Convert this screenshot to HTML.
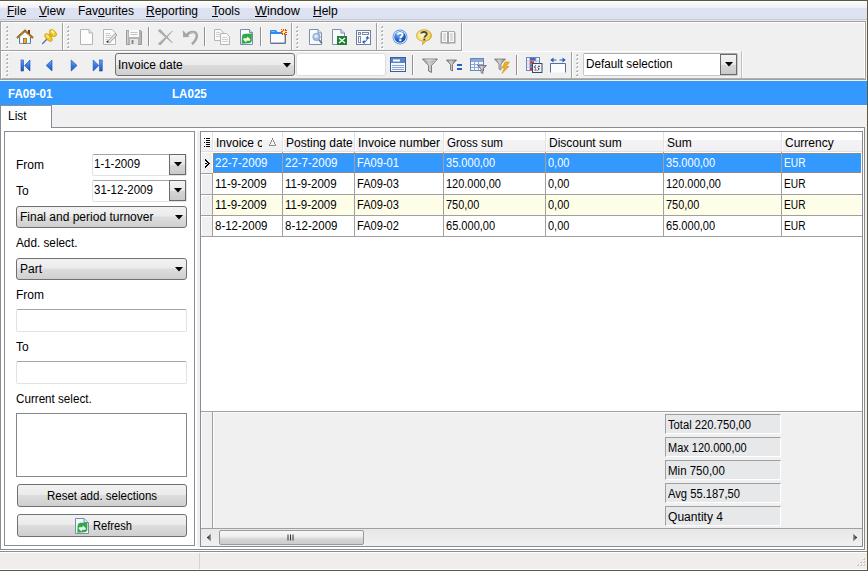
<!DOCTYPE html>
<html><head><meta charset="utf-8">
<style>
*{margin:0;padding:0;box-sizing:border-box}
html,body{width:868px;height:571px;overflow:hidden;background:#f0f0f0;font-family:"Liberation Sans",sans-serif;font-size:12px;color:#000}
.a{position:absolute}
.t{position:absolute;white-space:nowrap;line-height:14px}
u{text-decoration:underline;text-underline-offset:1px;text-decoration-thickness:1px}
.g{position:absolute;width:2px;background:repeating-linear-gradient(#b0b0b0 0 1px,#fff 1px 2px,transparent 2px 4px)}
.vs{position:absolute;width:1px;background:#a0a0a0;box-shadow:1px 0 0 #fff}
.ic{position:absolute;width:16px;height:16px}
</style></head><body>
<!-- frame lines -->
<div class="a" style="left:0;top:0;width:868px;height:1px;background:#5c5a38"></div>
<div class="a" style="left:867px;top:0;width:1px;height:571px;background:#5c5a38"></div>
<div class="a" style="left:0;top:570px;width:868px;height:1px;background:#5c5a38"></div>

<!-- menu bar -->
<div class="a" style="left:0;top:1px;width:867px;height:18px;background:linear-gradient(#ffffff 0px,#f8f9fc 2px,#edf0f8 7px,#dfe3f1 7px,#dce1f0 18px)"></div>
<div class="a" style="left:0;top:19px;width:867px;height:1px;background:#c4c9d6"></div>
<div class="a" style="left:0;top:20px;width:867px;height:1px;background:#e6e8ec"></div>
<div id="menu" style="font-size:12px">
<div class="t" style="left:7px;top:4px"><u>F</u>ile</div>
<div class="t" style="left:39px;top:4px"><u>V</u>iew</div>
<div class="t" style="left:78px;top:4px">Fav<u>o</u>urites</div>
<div class="t" style="left:146px;top:4px"><u>R</u>eporting</div>
<div class="t" style="left:212px;top:4px"><u>T</u>ools</div>
<div class="t" style="left:255px;top:4px;transform:scaleX(1.05);transform-origin:0 0"><u>W</u>indow</div>
<div class="t" style="left:313px;top:4px"><u>H</u>elp</div>
</div>

<!-- toolbar container -->
<div class="a" style="left:0;top:21px;width:866px;height:59px;border:1px solid #a0a0a0;background:#f0f0f0"></div>
<div class="a" style="left:1px;top:22px;width:864px;height:57px;border:1px solid #fff;border-bottom-color:#b0b0b0"></div>
<!-- toolbar groups -->
<div class="a" style="left:1px;top:50px;width:461px;height:1px;background:#a0a0a0"></div>
<div class="a" style="left:1px;top:51px;width:461px;height:1px;background:#fff"></div>
<div class="vs" style="left:62px;top:23px;height:27px"></div>
<div class="vs" style="left:291px;top:23px;height:27px"></div>
<div class="vs" style="left:376px;top:23px;height:27px"></div>
<div class="vs" style="left:461px;top:23px;height:27px"></div>
<div class="vs" style="left:571px;top:51px;height:27px"></div>
<svg class="a" style="left:6px;top:26px" width="3" height="23"><path d="M1 2h2v1h-2zM1 6h2v1h-2zM1 10h2v1h-2zM1 14h2v1h-2zM1 18h2v1h-2zM1 22h2v1h-2z" fill="#ffffff"/><path d="M1 0h1v1h-1zM0 1h2v1h-2zM1 4h1v1h-1zM0 5h2v1h-2zM1 8h1v1h-1zM0 9h2v1h-2zM1 12h1v1h-1zM0 13h2v1h-2zM1 16h1v1h-1zM0 17h2v1h-2zM1 20h1v1h-1zM0 21h2v1h-2z" fill="#b0b0b0"/></svg>
<svg class="a" style="left:67px;top:26px" width="3" height="23"><path d="M1 2h2v1h-2zM1 6h2v1h-2zM1 10h2v1h-2zM1 14h2v1h-2zM1 18h2v1h-2zM1 22h2v1h-2z" fill="#ffffff"/><path d="M1 0h1v1h-1zM0 1h2v1h-2zM1 4h1v1h-1zM0 5h2v1h-2zM1 8h1v1h-1zM0 9h2v1h-2zM1 12h1v1h-1zM0 13h2v1h-2zM1 16h1v1h-1zM0 17h2v1h-2zM1 20h1v1h-1zM0 21h2v1h-2z" fill="#b0b0b0"/></svg>
<svg class="a" style="left:296px;top:26px" width="3" height="23"><path d="M1 2h2v1h-2zM1 6h2v1h-2zM1 10h2v1h-2zM1 14h2v1h-2zM1 18h2v1h-2zM1 22h2v1h-2z" fill="#ffffff"/><path d="M1 0h1v1h-1zM0 1h2v1h-2zM1 4h1v1h-1zM0 5h2v1h-2zM1 8h1v1h-1zM0 9h2v1h-2zM1 12h1v1h-1zM0 13h2v1h-2zM1 16h1v1h-1zM0 17h2v1h-2zM1 20h1v1h-1zM0 21h2v1h-2z" fill="#b0b0b0"/></svg>
<svg class="a" style="left:381px;top:26px" width="3" height="23"><path d="M1 2h2v1h-2zM1 6h2v1h-2zM1 10h2v1h-2zM1 14h2v1h-2zM1 18h2v1h-2zM1 22h2v1h-2z" fill="#ffffff"/><path d="M1 0h1v1h-1zM0 1h2v1h-2zM1 4h1v1h-1zM0 5h2v1h-2zM1 8h1v1h-1zM0 9h2v1h-2zM1 12h1v1h-1zM0 13h2v1h-2zM1 16h1v1h-1zM0 17h2v1h-2zM1 20h1v1h-1zM0 21h2v1h-2z" fill="#b0b0b0"/></svg>
<svg class="a" style="left:6px;top:54px" width="3" height="23"><path d="M1 2h2v1h-2zM1 6h2v1h-2zM1 10h2v1h-2zM1 14h2v1h-2zM1 18h2v1h-2zM1 22h2v1h-2z" fill="#ffffff"/><path d="M1 0h1v1h-1zM0 1h2v1h-2zM1 4h1v1h-1zM0 5h2v1h-2zM1 8h1v1h-1zM0 9h2v1h-2zM1 12h1v1h-1zM0 13h2v1h-2zM1 16h1v1h-1zM0 17h2v1h-2zM1 20h1v1h-1zM0 21h2v1h-2z" fill="#b0b0b0"/></svg>
<svg class="a" style="left:576px;top:54px" width="3" height="23"><path d="M1 2h2v1h-2zM1 6h2v1h-2zM1 10h2v1h-2zM1 14h2v1h-2zM1 18h2v1h-2zM1 22h2v1h-2z" fill="#ffffff"/><path d="M1 0h1v1h-1zM0 1h2v1h-2zM1 4h1v1h-1zM0 5h2v1h-2zM1 8h1v1h-1zM0 9h2v1h-2zM1 12h1v1h-1zM0 13h2v1h-2zM1 16h1v1h-1zM0 17h2v1h-2zM1 20h1v1h-1zM0 21h2v1h-2z" fill="#b0b0b0"/></svg>
<div class="vs" style="left:148px;top:27px;height:19px;background:#909090"></div>
<div class="vs" style="left:204px;top:27px;height:19px;background:#909090"></div>
<div class="vs" style="left:260px;top:27px;height:19px;background:#909090"></div>
<div class="vs" style="left:412px;top:55px;height:20px;background:#909090"></div>
<div class="vs" style="left:516px;top:55px;height:20px;background:#909090"></div>
<!-- icons -->
<svg class="a" style="left:14px;top:59px" width="96" height="14" viewBox="0 0 96 14"><defs><linearGradient id="ng" x1="0" y1="0" x2="0" y2="1"><stop offset="0" stop-color="#6aa8f4"/><stop offset="0.5" stop-color="#3a7ae0"/><stop offset="1" stop-color="#1c54c0"/></linearGradient></defs>
<rect x="7" y="1" width="2.6" height="11" fill="url(#ng)" stroke="#1a4aa8" stroke-width="0.6"/>
<path d="M16 1 V12 L10.6 6.5 Z" fill="url(#ng)" stroke="#1a4aa8" stroke-width="0.6" stroke-linejoin="round"/>
<path d="M38 1 V12 L32.2 6.5 Z" fill="url(#ng)" stroke="#1a4aa8" stroke-width="0.6" stroke-linejoin="round"/>
<path d="M57.2 1 V12 L63 6.5 Z" fill="url(#ng)" stroke="#1a4aa8" stroke-width="0.6" stroke-linejoin="round"/>
<path d="M79.2 1 V12 L84.8 6.5 Z" fill="url(#ng)" stroke="#1a4aa8" stroke-width="0.6" stroke-linejoin="round"/>
<rect x="85.6" y="1" width="2.6" height="11" fill="url(#ng)" stroke="#1a4aa8" stroke-width="0.6"/>
</svg>
<svg class="a" style="left:16px;top:29px" width="18" height="16" viewBox="0 0 18 16"><rect x="12" y="1" width="2" height="4" fill="#9a2418"/>
<path d="M3.5 7.5 L9 2.5 L14.5 7.5 V14.5 H3.5 Z" fill="#fbfcfe" stroke="#66799a" stroke-width="1"/>
<path d="M4.5 8 V14 H13.5 V8" fill="none" stroke="#dce4f0" stroke-width="0.6"/>
<path d="M1 9 L9 1.6 L17 9" fill="none" stroke="#6e5020" stroke-width="2"/>
<path d="M1.6 8.6 L9 1.9 L16.4 8.6" fill="none" stroke="#f2b418" stroke-width="1.1" stroke-dasharray="1 0.6"/>
<rect x="7.5" y="9.5" width="3" height="5" fill="#f4ac10" stroke="#6a5a40" stroke-width="0.7"/></svg>
<svg class="a" style="left:41px;top:29px" width="16" height="16" viewBox="0 0 16 16"><path d="M1.2 15 L6 10" stroke="#4a6898" stroke-width="1.1"/>
<g transform="rotate(45 8.5 7.5)">
<path d="M6.5 4 H10.5 L11 8 H6 Z" fill="#e0b418"/>
<ellipse cx="8.5" cy="2.6" rx="4.3" ry="2.6" fill="#f2cf30" stroke="#c49812" stroke-width="0.7"/>
<ellipse cx="8.5" cy="9" rx="4.8" ry="2.4" fill="#f0c828" stroke="#c49812" stroke-width="0.7"/>
<ellipse cx="7.5" cy="2" rx="2" ry="1" fill="#fff0a0"/>
<ellipse cx="7" cy="8.6" rx="2" ry="0.9" fill="#fae890"/>
</g></svg>
<svg class="a" style="left:79px;top:29px" width="16" height="16" viewBox="0 0 16 16"><path d="M1.5 0.5 H10 L13.5 4 V15.5 H1.5 Z" fill="#fcfcfc" stroke="#b4b4b4"/>
<path d="M10 0.5 V4 H13.5" fill="#e8e8e8" stroke="#b4b4b4"/></svg>
<svg class="a" style="left:102px;top:29px" width="16" height="16" viewBox="0 0 16 16"><path d="M1.5 0.5 H10 L13.5 4 V15.5 H1.5 Z" fill="#fcfcfc" stroke="#b4b4b4"/>
<path d="M3.5 4.5 H8 M3.5 6.5 H9 M3.5 8.5 H8 M3.5 10.5 H6 M3.5 12.5 H5" stroke="#c8c8c8"/>
<path d="M5.5 12.5 L13 4.5 L15 6 L7.5 14 Z" fill="#e0e0e0" stroke="#8c8c8c" stroke-width="0.8"/>
<path d="M5 13.5 L6 12" stroke="#303030" stroke-width="1.5"/></svg>
<svg class="a" style="left:126px;top:29px" width="16" height="16" viewBox="0 0 16 16"><path d="M0.5 1.5 H14.5 L15.5 2.5 V15.5 H0.5 Z" fill="#b4b4b4" stroke="#9a9a9a"/>
<rect x="3" y="1" width="10" height="7" fill="#fbfbfb"/>
<path d="M4.5 3.5 H11.5 M4.5 5.5 H11.5" stroke="#c4c4c4"/>
<rect x="4" y="10" width="8" height="6" fill="#e8e8e8"/>
<rect x="5.5" y="11" width="2" height="4" fill="#8a8a8a"/>
<rect x="1" y="2" width="1" height="13" fill="#d0d0d0"/></svg>
<svg class="a" style="left:157px;top:28px" width="16" height="18" viewBox="0 0 16 18"><path d="M1 3 Q1.5 0.8 3.5 1.5 L15.5 14.2 L15 15 Z" fill="#a4a4a4"/>
<path d="M15.5 2.5 L15.5 3.2 L4 16.8 Q1.5 17.8 1.2 15.5 Z" fill="#a4a4a4"/>
<path d="M2.2 2.4 L14 13.5 M14.2 4 L2.5 15.5" stroke="#c4c4c4" stroke-width="0.5"/></svg>
<svg class="a" style="left:182px;top:29px" width="16" height="16" viewBox="0 0 16 16"><path d="M4.6 6.6 C7.5 1.8 14.8 1.8 14.8 7 C14.8 10 12.5 12.8 10 15.2" fill="none" stroke="#a6a6a6" stroke-width="2.5"/>
<path d="M0.8 1.3 L1.2 8.2 L7.6 8 Z" fill="#a6a6a6"/>
<path d="M8 4.2 C10 2.6 13.6 3 13.8 6.5" fill="none" stroke="#c8c8c8" stroke-width="0.6"/></svg>
<svg class="a" style="left:214px;top:29px" width="16" height="16" viewBox="0 0 16 16"><path d="M0.5 0.5 H6.5 L9 3 V11.5 H0.5 Z" fill="#fafafa" stroke="#b4b4b4"/>
<path d="M2 3.5 H6 M2 5.5 H7 M2 7.5 H7" stroke="#d0d0d0"/>
<path d="M6.5 4.5 H12.5 L15.5 7.5 V15.5 H6.5 Z" fill="#fafafa" stroke="#b4b4b4"/>
<path d="M8 8.5 H13 M8 10.5 H14 M8 12.5 H14" stroke="#d0d0d0"/></svg>
<svg class="a" style="left:239px;top:29px" width="16" height="16" viewBox="0 0 16 16"><path d="M1.5 0.5 H10.5 L13.5 3.5 V15.5 H1.5 Z" fill="#fcfdff" stroke="#7a8cac"/>
<path d="M10.5 0.5 V3.5 H13.5" fill="#d8e4f4" stroke="#7a8cac"/>
<path d="M3 7.5 Q3.2 5 6 4.8 L13 4.4 L12.8 11.5 Q12.5 14.2 9.5 14.3 L2.7 14.8 Z" fill="#34a848"/>
<path d="M4.5 9.8 H10 L8.2 8.2 M11 11.2 H5.5 L7.3 12.8" fill="none" stroke="#f4fff4" stroke-width="1.2"/></svg>
<svg class="a" style="left:270px;top:29px" width="17" height="16" viewBox="0 0 17 16"><path d="M0.5 4.5 H15.5 V14.5 H0.5 Z" fill="#fafbfe" stroke="#6e7e9c"/>
<path d="M1 14 H15 V5" fill="none" stroke="#5a6a88" stroke-width="0.8"/>
<path d="M0 5 V2.2 Q0 1 1.5 1 H5.5 Q6.5 1 7 2.5 L7.5 3 H12 V5 Z" fill="#2a8cf0"/>
<path d="M1.5 2.5 H5" stroke="#9ccaf8" stroke-width="0.8"/>
<path d="M11 0h1v1h-1zM13 0h1v1h-1zM15 0h1v1h-1zM13 1h1v1h-1zM15 1h1v1h-1zM16 1h1v1h-1zM11 2h1v1h-1zM12 2h1v1h-1zM15 3h1v1h-1zM16 3h1v1h-1zM11 4h1v1h-1zM12 4h1v1h-1zM14 4h1v1h-1zM12 5h1v1h-1zM14 5h1v1h-1zM16 5h1v1h-1z" fill="#f04010"/><path d="M12 1h1v1h-1zM14 1h1v1h-1zM13 2h1v1h-1zM14 2h1v1h-1zM15 2h1v1h-1zM12 3h1v1h-1zM13 3h1v1h-1zM14 3h1v1h-1zM13 4h1v1h-1zM15 4h1v1h-1z" fill="#ffe030"/><rect x="13" y="2" width="2" height="2" fill="#fff8b0"/></svg>
<svg class="a" style="left:308px;top:29px" width="16" height="16" viewBox="0 0 16 16"><path d="M1.5 0.5 H10 L13.5 4 V15.5 H1.5 Z" fill="#f8fafc" stroke="#7890b0"/>
<path d="M10 0.5 V4 H13.5" fill="#dde6f0" stroke="#7890b0"/>
<circle cx="8.5" cy="8" r="3.7" fill="#9cbce8" stroke="#8aa0c0" stroke-width="0.8"/>
<circle cx="8" cy="7.2" r="1.8" fill="#e0ecfa"/>
<path d="M11.2 11 L14 14.5" stroke="#707070" stroke-width="1.5"/></svg>
<svg class="a" style="left:331px;top:29px" width="16" height="16" viewBox="0 0 16 16"><path d="M1.5 0.5 H10 L13.5 4 V15.5 H1.5 Z" fill="#f8fafc" stroke="#7890b0"/>
<path d="M10 0.5 V4 H13.5" fill="#dde6f0" stroke="#7890b0"/>
<rect x="6" y="7" width="10" height="9" fill="#1e8030"/>
<path d="M8 9 L14 14 M14 9 L8 14" stroke="#fff" stroke-width="1.4"/></svg>
<svg class="a" style="left:356px;top:30px" width="16" height="16" viewBox="0 0 16 16"><rect x="0.5" y="0.5" width="14" height="14" fill="#fafcfe" stroke="#6a7fa0"/>
<rect x="2.5" y="2.5" width="2" height="2" fill="none" stroke="#7a8aa8"/>
<rect x="6.5" y="2.5" width="6" height="2" fill="none" stroke="#7a8aa8"/>
<rect x="2.5" y="6.5" width="2" height="6" fill="none" stroke="#7a8aa8"/>
<path d="M7 12 C10 12 11.5 10 11.5 7" fill="none" stroke="#2050c0" stroke-width="1"/>
<path d="M6 12 L8.5 10 L8.5 14 Z M11.5 6 L9.5 8.5 L13.5 8.5 Z" fill="#2050c0"/></svg>
<svg class="a" style="left:392px;top:29px" width="16" height="16" viewBox="0 0 16 16"><defs><radialGradient id="bg1" cx="0.35" cy="0.3" r="0.8"><stop offset="0" stop-color="#7ab4f4"/><stop offset="0.5" stop-color="#2a6cd0"/><stop offset="1" stop-color="#0a3a98"/></radialGradient></defs>
<circle cx="8" cy="8" r="7.5" fill="#5a96e0"/>
<circle cx="8" cy="8" r="6.6" fill="#eaf2fc"/>
<circle cx="8" cy="8" r="5.8" fill="url(#bg1)"/>
<path d="M5.6 5.6 C5.6 3.4 10.6 3.2 10.6 5.8 C10.6 7.4 8.3 7.6 8.3 9.2" fill="none" stroke="#fff" stroke-width="2"/>
<rect x="7.2" y="10.2" width="2.2" height="2.1" fill="#fff"/></svg>
<svg class="a" style="left:416px;top:29px" width="16" height="16" viewBox="0 0 16 16"><defs><radialGradient id="yg" cx="0.4" cy="0.35" r="0.7"><stop offset="0" stop-color="#fffbc8"/><stop offset="0.6" stop-color="#f4dc60"/><stop offset="1" stop-color="#d8a828"/></radialGradient></defs>
<path d="M8 0.8 C12.3 0.8 15.4 3.3 15.4 6.6 C15.4 9.4 13.2 11.5 10 12 L6.6 15.6 L7 12.2 C3 11.8 0.6 9.6 0.6 6.6 C0.6 3.3 3.7 0.8 8 0.8 Z" fill="url(#yg)" stroke="#c89a28" stroke-width="0.8"/>
<path d="M5.2 4.6 C5.2 2.6 10.8 2.2 10.8 5 C10.8 6.6 8.6 7 8.4 8.6" fill="none" stroke="#4a4a58" stroke-width="1.8"/>
<rect x="7.3" y="9.6" width="2" height="2" fill="#4a4a58"/></svg>
<svg class="a" style="left:440px;top:31px" width="16" height="14" viewBox="0 0 16 14"><path d="M0.5 1.5 H15.5 V12.5 H9 L8 13.5 L7 12.5 H0.5 Z" fill="#a4a4a4"/>
<path d="M1.5 0.5 H7.5 V11.5 H1.5 Z M8.5 0.5 H14.5 V11.5 H8.5 Z" fill="#fafafa" stroke="#9c9c9c" stroke-width="0.8"/>
<path d="M3 3 H6 M3 5 H6 M3 7 H6 M3 9 H6 M10 3 H13 M10 5 H13 M10 7 H13 M10 9 H13" stroke="#b8b8b8" stroke-width="0.9"/></svg>




<svg class="a" style="left:390px;top:57px" width="16" height="16" viewBox="0 0 16 16"><rect x="0.5" y="0.5" width="15" height="14" fill="#f4f8fc" stroke="#3a5f98"/>
<rect x="1" y="1" width="14" height="5" fill="#5a86c8"/>
<rect x="3" y="2.5" width="7" height="2" fill="#fff"/>
<path d="M2 8.5 H14 M2 10.5 H14 M2 12.5 H14" stroke="#8aa6d0"/></svg>
<svg class="a" style="left:422px;top:58px" width="16" height="16" viewBox="0 0 16 16"><defs><linearGradient id="fg"><stop offset="0" stop-color="#8a8a8a"/><stop offset="0.45" stop-color="#d0d0d0"/><stop offset="1" stop-color="#7a7a7a"/></linearGradient></defs><path d="M0.5 1 H15.5 L9.5 7.5 V14.5 L6.5 13 V7.5 Z" fill="url(#fg)" stroke="#6a6a6a" stroke-width="0.8"/>
<path d="M2.5 2 H13.5 L9 6.5" fill="none" stroke="#e8e8e8" stroke-width="0.8"/></svg>
<svg class="a" style="left:446px;top:59px" width="16" height="16" viewBox="0 0 16 16"><path d="M0.5 1 H10.5 L6.5 5.5 V12 L4.5 11 V5.5 Z" fill="url(#fg)" stroke="#6a6a6a" stroke-width="0.8"/>
<rect x="11" y="5" width="5" height="2" fill="#2a5cc0"/><rect x="11" y="9" width="5" height="2" fill="#2a5cc0"/></svg>
<svg class="a" style="left:470px;top:58px" width="17" height="16" viewBox="0 0 17 16"><rect x="0.5" y="0.5" width="13" height="12" fill="#f4f8fc" stroke="#6c84b0"/>
<rect x="1" y="1" width="12" height="3" fill="#8ca8d8"/>
<path d="M1 6.5 H13 M1 9.5 H13 M4.5 4 V12.5 M8.5 4 V12.5" stroke="#8ca8d8"/>
<path d="M7.5 7.5 H16.5 L13 11 V15.5 L11 14.5 V11 Z" fill="url(#fg)" stroke="#606060" stroke-width="0.7"/></svg>
<svg class="a" style="left:494px;top:58px" width="16" height="16" viewBox="0 0 16 16"><path d="M0.5 1 H11.5 L7 6 V12 L5 11 V6 Z" fill="url(#fg)" stroke="#7a7a7a" stroke-width="0.8"/>
<path d="M11 4 L15.5 4 L12 8.5 L15 8.5 L8 15.5 L10.5 10 L8 10 Z" fill="#f0b020" stroke="#c08010" stroke-width="0.5"/></svg>
<svg class="a" style="left:526px;top:57px" width="17" height="16" viewBox="0 0 17 16"><rect x="0.5" y="0.5" width="13" height="13" fill="#f4f6fa" stroke="#7088b0"/>
<rect x="4" y="1" width="6" height="3" fill="#3a6ad0"/><rect x="4" y="4" width="4" height="3" fill="#e03020"/><rect x="4" y="7" width="4" height="3" fill="#3a6ad0"/><rect x="4" y="10" width="4" height="3" fill="#e03020"/>
<path d="M1 4 H13 M1 7 H13 M1 10 H13 M3.5 1 V13 M10 1 V13" stroke="#a8b8d0" stroke-width="0.8"/>
<rect x="6.5" y="6.5" width="9.5" height="9" fill="#eef2f8" stroke="#3a4a68"/>
<path d="M10 8.5 L8.2 10 L10 11.5 M11.5 13.5 L13.3 12 L11.5 10.5 M8.5 13 H10.5 M12 9.3 H14" fill="none" stroke="#202020" stroke-width="0.9"/></svg>
<svg class="a" style="left:550px;top:57px" width="17" height="16" viewBox="0 0 17 16"><path d="M0.5 15.5 V6.5 H15.5 V15.5" fill="#fbfcfe" stroke="#5a6e90"/>
<path d="M1 3 H6.5 M9.5 3 H15" stroke="#2a5cc8" stroke-width="1.2"/>
<path d="M0.3 3 L3.5 0.5 V5.5 Z M15.7 3 L12.5 0.5 V5.5 Z" fill="#2a5cc8"/></svg>
<!-- row2 controls -->
<div class="a" style="left:115px;top:53px;width:180px;height:23px;border:1px solid #707070;border-radius:3px;background:linear-gradient(#f2f2f2 0,#ebebeb 50%,#dddddd 51%,#cfcfcf 100%)"></div>
<div class="t" style="left:118px;top:58px;font-size:12px">Invoice date</div>
<svg class="a" style="left:283px;top:63px" width="8" height="5"><path d="M0 0 H8 L4 4.5 Z" fill="#000"/></svg>
<div class="a" style="left:296px;top:53px;width:90px;height:23px;border:1px solid #d9dde3;border-radius:3px;background:#fff"></div>
<div class="a" style="left:462px;top:51px;width:280px;height:1px;background:#fff"></div>
<div class="a" style="left:741px;top:51px;width:1px;height:27px;background:#c0c0c0;box-shadow:1px 0 0 #fafafa"></div>
<div class="a" style="left:583px;top:53px;width:155px;height:23px;border:1px solid #c4c8ce;border-top-color:#a8acb2;border-radius:2px;background:#fff"></div>
<div class="t" style="left:586px;top:57px;font-size:12px;transform:scaleX(0.975);transform-origin:0 0">Default selection</div>
<div class="a" style="left:720px;top:54px;width:17px;height:21px;border:1px solid #6a6a6a;background:linear-gradient(#f4f4f4,#e6e6e6 50%,#d6d6d6 51%,#cacaca)"></div>
<svg class="a" style="left:725px;top:62px" width="8" height="5"><path d="M0 0 H8 L4 4.5 Z" fill="#000"/></svg>
<!-- blue bar -->
<div class="a" style="left:0;top:81px;width:867px;height:24px;background:#3399ff"></div>
<div class="t" style="left:8px;top:87px;color:#fff;font-weight:bold;font-size:12px;transform:scaleX(0.965);transform-origin:0 0">FA09-01</div>
<div class="t" style="left:172px;top:87px;color:#fff;font-weight:bold;font-size:12px;transform:scaleX(0.965);transform-origin:0 0">LA025</div>

<!-- tab strip -->
<div class="a" style="left:0;top:105px;width:867px;height:23px;background:#f0f0f0"></div>
<div class="a" style="left:51px;top:127px;width:814px;height:1px;background:#898c95"></div>
<div class="a" style="left:52px;top:105px;width:814px;height:1px;background:#fcf9f4"></div>
<div class="a" style="left:0;top:105px;width:52px;height:23px;background:#fff;border-right:1px solid #898c95;border-left:1px solid #898c95;border-top:1px solid #8c8e92"></div>
<div class="t" style="left:8px;top:109px;font-size:12px">List</div>

<!-- tab content -->
<div class="a" style="left:0;top:128px;width:865px;height:422px;background:#fff;border:1px solid #898c95;border-top:none"></div>

<!-- left panel -->
<div class="a" style="left:4px;top:131px;width:191px;height:415px;border:1px solid #898c95;background:#fff"></div>
<div class="t" style="left:16px;top:158px">From</div>
<div class="a" style="left:92px;top:154px;width:95px;height:22px;border:1px solid #dfe3e9;border-top-color:#a5a5a5;border-radius:2px;background:#fff"></div>
<div class="a" style="left:169px;top:154px;width:17px;height:21px;border:1px solid #6a6a6a;background:linear-gradient(#f4f4f4,#e6e6e6 50%,#d6d6d6 51%,#cacaca)"></div>
<svg class="a" style="left:174px;top:162px" width="8" height="5"><path d="M0 0 H8 L4 4.5 Z" fill="#000"/></svg>
<div class="t" style="left:94px;top:157px;font-size:12px;transform:scaleX(0.9583);transform-origin:0 0">1-1-2009</div>
<div class="t" style="left:16px;top:184px">To</div>
<div class="a" style="left:92px;top:180px;width:95px;height:22px;border:1px solid #dfe3e9;border-top-color:#a5a5a5;border-radius:2px;background:#fff"></div>
<div class="a" style="left:169px;top:180px;width:17px;height:21px;border:1px solid #6a6a6a;background:linear-gradient(#f4f4f4,#e6e6e6 50%,#d6d6d6 51%,#cacaca)"></div>
<svg class="a" style="left:174px;top:188px" width="8" height="5"><path d="M0 0 H8 L4 4.5 Z" fill="#000"/></svg>
<div class="t" style="left:94px;top:183px;font-size:12px;transform:scaleX(0.9583);transform-origin:0 0">31-12-2009</div>
<div class="a" style="left:16px;top:206px;width:171px;height:22px;border:1px solid #707070;border-radius:3px;background:linear-gradient(#f2f2f2 0,#ebebeb 45%,#dddddd 50%,#cfcfcf 100%)"></div>
<svg class="a" style="left:175px;top:215px" width="8" height="5"><path d="M0 0 H8 L4 4.5 Z" fill="#000"/></svg>
<div class="t" style="left:20px;top:210px">Final and period turnover</div>
<div class="t" style="left:16px;top:236px;transform:scaleX(0.98);transform-origin:0 0">Add. select.</div>
<div class="a" style="left:16px;top:258px;width:171px;height:22px;border:1px solid #707070;border-radius:3px;background:linear-gradient(#f2f2f2 0,#ebebeb 45%,#dddddd 50%,#cfcfcf 100%)"></div>
<svg class="a" style="left:175px;top:267px" width="8" height="5"><path d="M0 0 H8 L4 4.5 Z" fill="#000"/></svg>
<div class="t" style="left:20px;top:262px">Part</div>
<div class="t" style="left:16px;top:288px">From</div>
<div class="a" style="left:16px;top:309px;width:171px;height:23px;border:1px solid #dfe3e9;border-top-color:#a5a5a5;border-radius:2px;background:#fff"></div>
<div class="t" style="left:16px;top:340px">To</div>
<div class="a" style="left:16px;top:361px;width:171px;height:23px;border:1px solid #dfe3e9;border-top-color:#a5a5a5;border-radius:2px;background:#fff"></div>
<div class="t" style="left:16px;top:392px;font-size:12px;transform:scaleX(0.97);transform-origin:0 0">Current select.</div>
<div class="a" style="left:16px;top:413px;width:171px;height:64px;border:1px solid #828790;background:#fff"></div>
<div class="a" style="left:17px;top:484px;width:170px;height:23px;border:1px solid #707070;border-radius:3px;background:linear-gradient(#f2f2f2 0,#ebebeb 45%,#dddddd 50%,#cfcfcf 100%)"></div>
<div class="t" style="left:17px;top:489px;width:170px;text-align:center;font-size:12px;transform:scaleX(0.96);transform-origin:85px 0">Reset add. selections</div>
<div class="a" style="left:17px;top:514px;width:170px;height:23px;border:1px solid #707070;border-radius:3px;background:linear-gradient(#f2f2f2 0,#ebebeb 45%,#dddddd 50%,#cfcfcf 100%)"></div>
<div class="t" style="left:93px;top:519px;font-size:12px;transform:scaleX(0.93);transform-origin:0 0">Refresh</div>
<svg class="a" style="left:75px;top:518px" width="14" height="16" viewBox="0 0 14 16"><path d="M0.5 0.5 H9 L13.5 4.5 V15.5 H0.5 Z" fill="#f4f8fc" stroke="#7890b0"/>
<path d="M9 0.5 V4.5 H13.5" fill="#dde6f0" stroke="#7890b0"/>
<path d="M2.6 7.5 Q2.8 5 5.5 4.8 L12.4 4.4 L12.3 11.5 Q12 14.2 9 14.3 L2.3 14.8 Z" fill="#34a848"/>
<path d="M4 9.8 H9.5 L7.7 8.2 M10.5 11.2 H5 L6.8 12.8" fill="none" stroke="#f4fff4" stroke-width="1.2"/></svg>


<div class="a" style="left:197px;top:131px;width:3px;height:416px;background:linear-gradient(90deg,#f4f4f4,#ececec 60%,#f4f4f4)"></div>
<!-- grid -->
<div class="a" style="left:200px;top:131px;width:663px;height:416px;border:1px solid #898c95;background:#fff"></div>
<div class="a" style="left:201px;top:132px;width:661px;height:19px;background:linear-gradient(#ffffff 0,#ffffff 40%,#f3f3f5 44%,#f1f1f3 100%)"></div>
<div class="a" style="left:201px;top:151px;width:661px;height:1px;background:#e0e0e2"></div>
<div class="a" style="left:212px;top:132px;width:1px;height:19px;background:#e2e3e4;box-shadow:1px 0 0 #fff"></div>
<div class="a" style="left:282px;top:132px;width:1px;height:19px;background:#e2e3e4;box-shadow:1px 0 0 #fff"></div>
<div class="a" style="left:354px;top:132px;width:1px;height:19px;background:#e2e3e4;box-shadow:1px 0 0 #fff"></div>
<div class="a" style="left:443px;top:132px;width:1px;height:19px;background:#e2e3e4;box-shadow:1px 0 0 #fff"></div>
<div class="a" style="left:545px;top:132px;width:1px;height:19px;background:#e2e3e4;box-shadow:1px 0 0 #fff"></div>
<div class="a" style="left:663px;top:132px;width:1px;height:19px;background:#e2e3e4;box-shadow:1px 0 0 #fff"></div>
<div class="a" style="left:781px;top:132px;width:1px;height:19px;background:#e2e3e4;box-shadow:1px 0 0 #fff"></div>
<svg class="a" style="left:204px;top:138px" width="6" height="9"><path d="M0 0h1v1h-1zM0 4h1v1h-1zM0 8h1v1h-1zM2 0h4v1h-4zM2 2h4v1h-4zM2 4h4v1h-4zM2 6h4v1h-4zM2 8h4v1h-4z" fill="#000"/></svg>
<div class="t" style="left:216px;top:136px;width:46px;overflow:hidden">Invoice c</div>
<div class="t" style="left:286px;top:136px">Posting date</div>
<div class="t" style="left:358px;top:136px">Invoice number</div>
<div class="t" style="left:447px;top:136px;transform:scaleX(0.965);transform-origin:0 0">Gross sum</div>
<div class="t" style="left:549px;top:136px">Discount sum</div>
<div class="t" style="left:667px;top:136px">Sum</div>
<div class="t" style="left:785px;top:136px">Currency</div>
<svg class="a" style="left:269px;top:138px" width="7" height="8"><path d="M3 0h1v1h-1zM3 1h1v1h-1zM2 2h1v1h-1zM4 2h1v1h-1zM2 3h1v1h-1zM4 3h1v1h-1zM1 4h1v1h-1zM5 4h1v1h-1zM1 5h1v1h-1zM5 5h1v1h-1zM0 6h1v1h-1zM6 6h1v1h-1zM0 7h1v1h-1zM1 7h1v1h-1zM2 7h1v1h-1zM3 7h1v1h-1zM4 7h1v1h-1zM5 7h1v1h-1zM6 7h1v1h-1z" fill="#8c8c8c"/></svg>
<div class="a" style="left:213px;top:153px;width:648px;height:20px;background:#3399ff"></div>
<div class="a" style="left:213px;top:195px;width:648px;height:20px;background:#fefee8"></div>
<div class="a" style="left:201px;top:152px;width:11px;height:21px;background:#f0f0f0;border-top:1px solid #fff;border-left:1px solid #fff"></div>
<div class="a" style="left:201px;top:174px;width:11px;height:20px;background:#f0f0f0;border-top:1px solid #fff;border-left:1px solid #fff"></div>
<div class="a" style="left:201px;top:195px;width:11px;height:20px;background:#f0f0f0;border-top:1px solid #fff;border-left:1px solid #fff"></div>
<div class="a" style="left:201px;top:216px;width:11px;height:20px;background:#f0f0f0;border-top:1px solid #fff;border-left:1px solid #fff"></div>
<div class="a" style="left:201px;top:194px;width:661px;height:1px;background:#a0a0a0"></div>
<div class="a" style="left:201px;top:215px;width:661px;height:1px;background:#a0a0a0"></div>
<div class="a" style="left:201px;top:236px;width:661px;height:1px;background:#a0a0a0"></div>
<div class="a" style="left:201px;top:173px;width:11px;height:1px;background:#a0a0a0"></div>
<div class="a" style="left:212px;top:173px;width:1px;height:63px;background:#a0a0a0"></div><div class="a" style="left:212px;top:152px;width:1px;height:21px;background:#fff"></div>
<div class="a" style="left:282px;top:152px;width:1px;height:84px;background:#a0a0a0"></div>
<div class="a" style="left:354px;top:152px;width:1px;height:84px;background:#a0a0a0"></div>
<div class="a" style="left:443px;top:152px;width:1px;height:84px;background:#a0a0a0"></div>
<div class="a" style="left:545px;top:152px;width:1px;height:84px;background:#a0a0a0"></div>
<div class="a" style="left:663px;top:152px;width:1px;height:84px;background:#a0a0a0"></div>
<div class="a" style="left:781px;top:152px;width:1px;height:84px;background:#a0a0a0"></div>
<div class="a" style="left:213px;top:153px;width:648px;height:20px;border:1px dotted #e07818;border-right:none"></div>
<svg class="a" style="left:204px;top:158px" width="7" height="11"><path d="M1 1h1v1h-1zM1 2h1v1h-1zM2 2h1v1h-1zM2 3h1v1h-1zM3 3h1v1h-1zM3 4h1v1h-1zM4 4h1v1h-1zM1 5h1v1h-1zM2 5h1v1h-1zM4 5h1v1h-1zM5 5h1v1h-1zM3 6h1v1h-1zM4 6h1v1h-1zM2 7h1v1h-1zM3 7h1v1h-1zM1 8h1v1h-1zM2 8h1v1h-1zM1 9h1v1h-1z" fill="#000"/></svg>
<div class="t" style="left:215px;top:156px;font-size:12px;color:#fff;transform:scaleX(0.9583);transform-origin:0 0">22-7-2009</div>
<div class="t" style="left:285px;top:156px;font-size:12px;color:#fff;transform:scaleX(0.9583);transform-origin:0 0">22-7-2009</div>
<div class="t" style="left:357px;top:156px;font-size:12px;color:#fff;transform:scaleX(0.9248);transform-origin:0 0">FA09-01</div>
<div class="t" style="left:446px;top:156px;font-size:12px;color:#fff;transform:scaleX(0.92);transform-origin:0 0">35.000,00</div>
<div class="t" style="left:548px;top:156px;font-size:12px;color:#fff;transform:scaleX(0.9152);transform-origin:0 0">0,00</div>
<div class="t" style="left:666px;top:156px;font-size:12px;color:#fff;transform:scaleX(0.92);transform-origin:0 0">35.000,00</div>
<div class="t" style="left:784px;top:156px;font-size:12px;color:#fff;transform:scaleX(0.8481);transform-origin:0 0">EUR</div>
<div class="t" style="left:215px;top:177px;font-size:12px;color:#000;transform:scaleX(0.9583);transform-origin:0 0">11-9-2009</div>
<div class="t" style="left:285px;top:177px;font-size:12px;color:#000;transform:scaleX(0.9583);transform-origin:0 0">11-9-2009</div>
<div class="t" style="left:357px;top:177px;font-size:12px;color:#000;transform:scaleX(0.9248);transform-origin:0 0">FA09-03</div>
<div class="t" style="left:446px;top:177px;font-size:12px;color:#000;transform:scaleX(0.9152);transform-origin:0 0">120.000,00</div>
<div class="t" style="left:548px;top:177px;font-size:12px;color:#000;transform:scaleX(0.9152);transform-origin:0 0">0,00</div>
<div class="t" style="left:666px;top:177px;font-size:12px;color:#000;transform:scaleX(0.9152);transform-origin:0 0">120.000,00</div>
<div class="t" style="left:784px;top:177px;font-size:12px;color:#000;transform:scaleX(0.8481);transform-origin:0 0">EUR</div>
<div class="t" style="left:215px;top:198px;font-size:12px;color:#000;transform:scaleX(0.9583);transform-origin:0 0">11-9-2009</div>
<div class="t" style="left:285px;top:198px;font-size:12px;color:#000;transform:scaleX(0.9583);transform-origin:0 0">11-9-2009</div>
<div class="t" style="left:357px;top:198px;font-size:12px;color:#000;transform:scaleX(0.9248);transform-origin:0 0">FA09-03</div>
<div class="t" style="left:446px;top:198px;font-size:12px;color:#000;transform:scaleX(0.9104);transform-origin:0 0">750,00</div>
<div class="t" style="left:548px;top:198px;font-size:12px;color:#000;transform:scaleX(0.9152);transform-origin:0 0">0,00</div>
<div class="t" style="left:666px;top:198px;font-size:12px;color:#000;transform:scaleX(0.9104);transform-origin:0 0">750,00</div>
<div class="t" style="left:784px;top:198px;font-size:12px;color:#000;transform:scaleX(0.8481);transform-origin:0 0">EUR</div>
<div class="t" style="left:215px;top:219px;font-size:12px;color:#000;transform:scaleX(0.9583);transform-origin:0 0">8-12-2009</div>
<div class="t" style="left:285px;top:219px;font-size:12px;color:#000;transform:scaleX(0.9583);transform-origin:0 0">8-12-2009</div>
<div class="t" style="left:357px;top:219px;font-size:12px;color:#000;transform:scaleX(0.9248);transform-origin:0 0">FA09-02</div>
<div class="t" style="left:446px;top:219px;font-size:12px;color:#000;transform:scaleX(0.92);transform-origin:0 0">65.000,00</div>
<div class="t" style="left:548px;top:219px;font-size:12px;color:#000;transform:scaleX(0.9152);transform-origin:0 0">0,00</div>
<div class="t" style="left:666px;top:219px;font-size:12px;color:#000;transform:scaleX(0.92);transform-origin:0 0">65.000,00</div>
<div class="t" style="left:784px;top:219px;font-size:12px;color:#000;transform:scaleX(0.8481);transform-origin:0 0">EUR</div>
<div class="a" style="left:201px;top:411px;width:661px;height:117px;background:#f0f0f0;border-top:1px solid #a0a0a0"></div>
<div class="a" style="left:201px;top:412px;width:661px;height:1px;background:#fafafa"></div>
<div class="a" style="left:201px;top:412px;width:1px;height:116px;background:#fafafa"></div>
<div class="a" style="left:212px;top:412px;width:1px;height:116px;background:#a0a0a0;box-shadow:1px 0 0 #fafafa"></div>
<div class="a" style="left:665px;top:414px;width:116px;height:20px;background:#e6e8ea;border:1px solid #fff;border-top-color:#a0a0a0;border-left-color:#a0a0a0"></div>
<div class="t" style="left:668px;top:418px;font-size:12px;transform:scaleX(0.9353);transform-origin:0 0">Total 220.750,00</div>
<div class="a" style="left:665px;top:437px;width:116px;height:20px;background:#e6e8ea;border:1px solid #fff;border-top-color:#a0a0a0;border-left-color:#a0a0a0"></div>
<div class="t" style="left:668px;top:441px;font-size:12px;transform:scaleX(0.9143);transform-origin:0 0">Max 120.000,00</div>
<div class="a" style="left:665px;top:460px;width:116px;height:20px;background:#e6e8ea;border:1px solid #fff;border-top-color:#a0a0a0;border-left-color:#a0a0a0"></div>
<div class="t" style="left:668px;top:464px;font-size:12px;transform:scaleX(0.9583);transform-origin:0 0">Min 750,00</div>
<div class="a" style="left:665px;top:483px;width:116px;height:20px;background:#e6e8ea;border:1px solid #fff;border-top-color:#a0a0a0;border-left-color:#a0a0a0"></div>
<div class="t" style="left:668px;top:487px;font-size:12px;transform:scaleX(0.9325);transform-origin:0 0">Avg 55.187,50</div>
<div class="a" style="left:665px;top:506px;width:116px;height:20px;background:#e6e8ea;border:1px solid #fff;border-top-color:#a0a0a0;border-left-color:#a0a0a0"></div>
<div class="t" style="left:668px;top:510px;font-size:12px;transform:scaleX(1.0063);transform-origin:0 0">Quantity 4</div>
<div class="a" style="left:201px;top:528px;width:661px;height:18px;background:linear-gradient(#e8e8e8,#f0f0f0);border-top:1px solid #a0a0a0"></div>
<div class="a" style="left:219px;top:530px;width:145px;height:15px;border:1px solid #9a9a9a;border-radius:2px;background:linear-gradient(#f8f8f8,#ececec 45%,#d6d6d6 60%,#cccccc)"></div>
<svg class="a" style="left:287px;top:534px" width="8" height="7"><path d="M1 0.5V6.5M3.5 0.5V6.5M6 0.5V6.5" stroke="#303030" stroke-width="1"/></svg>
<svg class="a" style="left:206px;top:533px" width="6" height="9"><defs><linearGradient id="sl"><stop offset="0" stop-color="#101010"/><stop offset="1" stop-color="#a0a0a0"/></linearGradient></defs><path d="M5 0.5 V8.5 L0.8 4.5 Z" fill="url(#sl)"/></svg>
<svg class="a" style="left:852px;top:533px" width="6" height="9"><defs><linearGradient id="sr"><stop offset="0" stop-color="#a0a0a0"/><stop offset="1" stop-color="#101010"/></linearGradient></defs><path d="M1 0.5 V8.5 L5.2 4.5 Z" fill="url(#sr)"/></svg>


<!-- status bar -->
<div class="a" style="left:0;top:550px;width:867px;height:20px;background:#fff"></div>
<div class="a" style="left:0;top:551px;width:867px;height:1px;background:#898c95"></div>
<div class="a" style="left:0;top:553px;width:867px;height:16px;background:#f0edec"></div>
<div class="a" style="left:199px;top:553px;width:1px;height:16px;background:#d2d2d2"></div>
<svg class="a" style="left:856px;top:558px" width="10" height="10"><path d="M7 0h2v2h-2zM4 3h2v2h-2zM7 3h2v2h-2zM1 6h2v2h-2zM4 6h2v2h-2zM7 6h2v2h-2z" fill="#c8c8c8"/><path d="M7 0h1v1h-1zM4 3h1v1h-1zM7 3h1v1h-1zM1 6h1v1h-1zM4 6h1v1h-1zM7 6h1v1h-1z" fill="#ffffff"/></svg>
</body></html>
